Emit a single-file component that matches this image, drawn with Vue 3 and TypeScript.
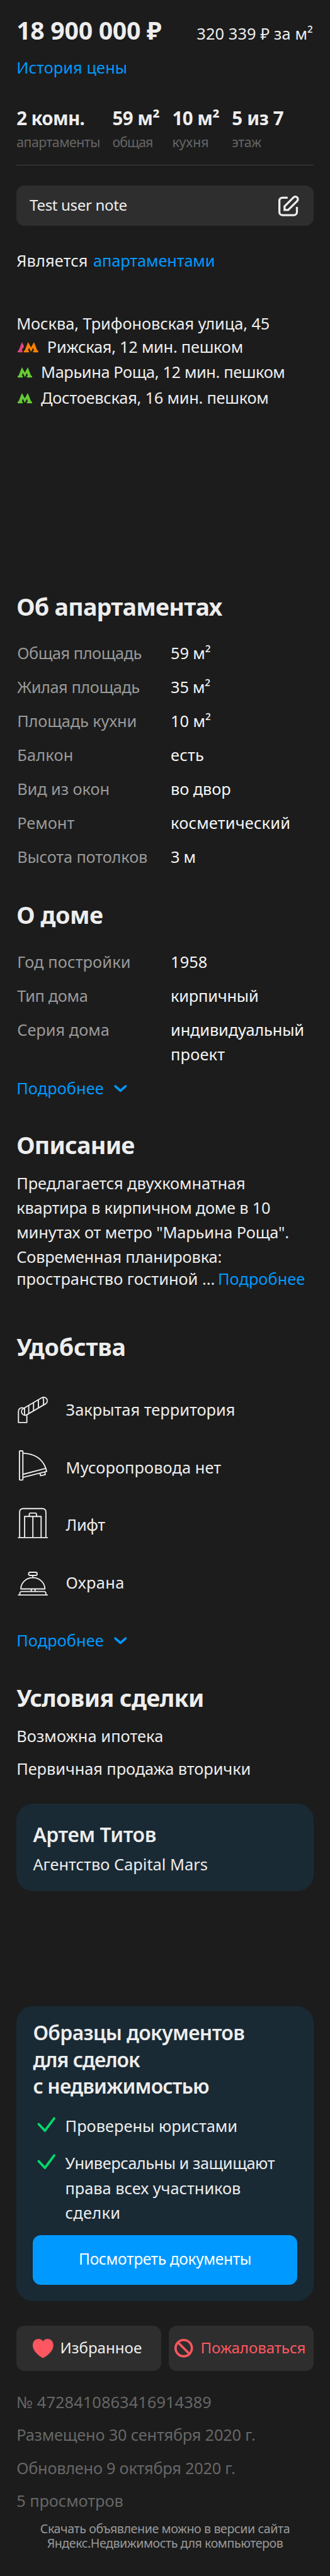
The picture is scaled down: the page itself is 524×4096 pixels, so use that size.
<script setup lang="ts">
interface Stat { value: string; valueWidth: number; label: string; labelWidth: number }
interface Param { label: string; labelWidth: number; lines: [string, number][] }

// Root font size is 10 layout units, so every rem length is units / 10.
const unit = 0.81855
const canvas = document.createElement('canvas').getContext('2d')!

// Tracks a line of text so that its glyphs span the given number of layout units.
const vFit = {
  mounted(el: HTMLElement, binding: { value: number }) {
    const text = (el.textContent ?? '').trim()
    const style = getComputedStyle(el)
    const size = parseFloat(style.fontSize)
    canvas.font = `${style.fontWeight} ${size * 10}px "Noto Sans"`
    const box = canvas.measureText(text)
    const ink = (box.actualBoundingBoxLeft + box.actualBoundingBoxRight) / 10
    const tracking = (binding.value * unit - ink) / (text.length - 1)
    el.style.letterSpacing = `${(tracking / size).toFixed(4)}em`
  },
}

const stats: Stat[] = [
  { value: '2 комн.', valueWidth: 130, label: 'апартаменты', labelWidth: 159.5 },
  { value: '59 м²', valueWidth: 89, label: 'общая', labelWidth: 76 },
  { value: '10 м²', valueWidth: 89, label: 'кухня', labelWidth: 66.6 },
  { value: '5 из 7', valueWidth: 98, label: 'этаж', labelWidth: 56 },
]

const stations = [
  { name: 'Рижская, 12 мин. пешком', width: 375, double: true },
  { name: 'Марьина Роща, 12 мин. пешком', width: 468.5, double: false },
  { name: 'Достоевская, 16 мин. пешком', width: 439.5, double: false },
]

const flat: Param[] = [
  { label: 'Общая площадь', labelWidth: 239, lines: [['59 м²', 74.5]] },
  { label: 'Жилая площадь', labelWidth: 237, lines: [['35 м²', 74.5]] },
  { label: 'Площадь кухни', labelWidth: 227, lines: [['10 м²', 74]] },
  { label: 'Балкон', labelWidth: 103.5, lines: [['есть', 61.5]] },
  { label: 'Вид из окон', labelWidth: 174, lines: [['во двор', 113]] },
  { label: 'Ремонт', labelWidth: 108, lines: [['косметический', 227]] },
  { label: 'Высота потолков', labelWidth: 249, lines: [['3 м', 45]] },
]

const house: Param[] = [
  { label: 'Год постройки', labelWidth: 215, lines: [['1958', 67]] },
  { label: 'Тип дома', labelWidth: 135, lines: [['кирпичный', 165.5]] },
  { label: 'Серия дома', labelWidth: 175, lines: [['индивидуальный', 254], ['проект', 102]] },
]

const description: [string, number][] = [
  ['Предлагается двухкомнатная', 439],
  ['квартира в кирпичном доме в 10', 489],
  ['минутах от метро "Марьина Роща".', 524.5],
  ['Современная планировка:', 394.5],
]

const amenities = [
  { icon: 'barrier', name: 'Закрытая территория', width: 325 },
  { icon: 'chute', name: 'Мусоропровода нет', width: 298 },
  { icon: 'lift', name: 'Лифт', width: 76 },
  { icon: 'bell', name: 'Охрана', width: 109 },
]

const docTitle: [string, number][] = [
  ['Образцы документов', 408],
  ['для сделок', 208],
  ['с недвижимостью', 340],
]

const docPoints: [string, number][][] = [
  [['Проверены юристами', 329]],
  [['Универсальны и защищают', 406.5], ['права всех участников', 337], ['сделки', 103]],
]

const info: [string, number][] = [
  ['№ 4728410863416914389', 374],
  ['Размещено 30 сентября 2020 г.', 459],
  ['Обновлено 9 октября 2020 г.', 421],
  ['5 просмотров', 204],
]
</script>

<template>
  <main class="page">
    <header class="price-row">
      <span class="price" v-fit="279">18 900 000 ₽</span>
      <span class="price-per" v-fit="223">320 339 ₽ за м²</span>
    </header>
    <a class="history link"><span v-fit="209.5">История цены</span></a>

    <section class="stats">
      <div v-for="s in stats" :key="s.label">
        <div class="stat-value"><span v-fit="s.valueWidth">{{ s.value }}</span></div>
        <div class="stat-label"><span v-fit="s.labelWidth">{{ s.label }}</span></div>
      </div>
    </section>

    <section class="note">
      <span class="note-text" v-fit="188">Test user note</span>
      <svg class="note-icon" viewBox="0 0 40 40">
        <path d="M18 4H8a6 6 0 0 0-6 6v22a6 6 0 0 0 6 6h22a6 6 0 0 0 6-6V22" />
        <path d="M12 28v-7L29.5 3.5a4.95 4.95 0 0 1 7 7L19 28z" />
      </svg>
    </section>

    <p class="status">
      <span v-fit="135">Является</span>
      <a class="link" v-fit="232.5">апартаментами</a>
    </p>

    <section class="address">
      <div class="street"><span v-fit="487">Москва, Трифоновская улица, 45</span></div>
      <div v-for="s in stations" :key="s.name" class="station">
        <svg v-if="s.double" class="metro metro-double" viewBox="0 0 40 20">
          <path class="line-pink" d="M8.3 0L12.3 7.5 10.5 13 10 11 8 16.5H9.5V20H0V16.5H1.8z" />
          <path class="line-orange" transform="translate(12 0)" d="M8.3 0L14 10.5 19.7 0 26.2 16.5H28V20H18V16.5H20L18 11 14 19 10 11 8 16.5H9.8V20H0V16.5H1.8z" />
        </svg>
        <svg v-else class="metro" viewBox="0 0 28 20">
          <path class="line-green" d="M8.3 0L14 10.5 19.7 0 26.2 16.5H28V20H18V16.5H20L18 11 14 19 10 11 8 16.5H9.8V20H0V16.5H1.8z" />
        </svg>
        <span v-fit="s.width">{{ s.name }}</span>
      </div>
    </section>

    <h2 class="h-flat"><span v-fit="397.5">Об апартаментах</span></h2>
    <dl class="params">
      <div v-for="p in flat" :key="p.label" class="param">
        <dt><span v-fit="p.labelWidth">{{ p.label }}</span></dt>
        <dd><div v-for="l in p.lines" :key="l[0]"><span v-fit="l[1]">{{ l[0] }}</span></div></dd>
      </div>
    </dl>

    <h2 class="h-house"><span v-fit="164.5">О доме</span></h2>
    <dl class="params">
      <div v-for="p in house" :key="p.label" class="param">
        <dt><span v-fit="p.labelWidth">{{ p.label }}</span></dt>
        <dd><div v-for="l in p.lines" :key="l[0]"><span v-fit="l[1]">{{ l[0] }}</span></div></dd>
      </div>
    </dl>
    <a class="more more-house link">
      <span v-fit="165">Подробнее</span>
      <svg class="chevron" viewBox="0 0 25 14"><path d="M2.5 2.5l10 9 10-9" /></svg>
    </a>

    <h2 class="h-about"><span v-fit="226">Описание</span></h2>
    <div class="about">
      <div v-for="l in description" :key="l[0]"><span v-fit="l[1]">{{ l[0] }}</span></div>
      <div class="about-last">
        <span v-fit="380.5">пространство гостиной ...</span>
        <a class="link" v-fit="165">Подробнее</a>
      </div>
    </div>

    <h2 class="h-amenities"><span v-fit="209.5">Удобства</span></h2>
    <ul class="amenities">
      <li v-for="a in amenities" :key="a.icon">
        <svg class="amenity-icon" viewBox="0 0 64 64">
          <g v-if="a.icon === 'barrier'">
            <path d="M14 28.2C13 27.6 12 27.3 11 27.3A7 7 0 0 0 4 34.3V56H20.3V42" />
            <path d="M13.2 28.95L49.8 7.65A7 7 0 0 1 56.8 19.75L20.2 41.05A7 7 0 0 1 13.2 28.95z" />
            <path d="M15.8 28V41.5M24 22.7V38.8M33.3 17.3V33.4M42.7 11.9V27.9M51.8 7.2C53 12 53.5 17 52.3 22.3" />
          </g>
          <g v-else-if="a.icon === 'chute'">
            <rect x="6" y="0" width="6.6" height="56.6" rx="1.2" />
            <path d="M13 4.5C34 5.5 50 15 57 33.5L58.7 39.9 13 51.5M13 45.5L56.5 34M45.7 43.5L47 48.2 56 46.2 55.2 41" />
          </g>
          <g v-else-if="a.icon === 'lift'">
            <path d="M3 56H61M6.3 56V6A6.3 6.3 0 0 1 12.6 -.3H51A6.3 6.3 0 0 1 57.3 6V56" />
            <path d="M16 56V15H48V56M32 15V56M25 15V10.9A2.5 2.5 0 0 1 27.5 8.4H36.5A2.5 2.5 0 0 1 39 10.9V15" />
          </g>
          <g v-else>
            <rect x="23.7" y="12.3" width="16.6" height="6" rx="3" />
            <path d="M32 18.3V22.7M8.7 44.6A23.3 21.8 0 0 1 55.3 44.6zM29 44.6V49.6M36.3 44.6V49.6M3 56.3H61" />
            <path d="M7.3 56.3C5.6 53 7 49.6 10.3 49.6H53.7C57 49.6 58.4 53 56.7 56.3" />
          </g>
        </svg>
        <span v-fit="a.width">{{ a.name }}</span>
      </li>
    </ul>
    <a class="more more-amenities link">
      <span v-fit="165">Подробнее</span>
      <svg class="chevron" viewBox="0 0 25 14"><path d="M2.5 2.5l10 9 10-9" /></svg>
    </a>

    <h2 class="h-terms"><span v-fit="361.5">Условия сделки</span></h2>
    <div class="terms">
      <div><span v-fit="279.5">Возможна ипотека</span></div>
      <div><span v-fit="449.5">Первичная продажа вторички</span></div>
    </div>

    <section class="card agent">
      <div class="card-title"><span v-fit="238">Артем Титов</span></div>
      <div class="agency"><span v-fit="338">Агентство Capital Mars</span></div>
    </section>

    <section class="card docs">
      <div v-for="l in docTitle" :key="l[0]" class="card-title"><span v-fit="l[1]">{{ l[0] }}</span></div>
      <ul class="points">
        <li v-for="p in docPoints" :key="p[0][0]">
          <svg class="check" viewBox="0 0 35 30"><path d="M3 14L15 27 33 2.8" /></svg>
          <div>
            <div v-for="l in p" :key="l[0]"><span v-fit="l[1]">{{ l[0] }}</span></div>
          </div>
        </li>
      </ul>
      <button class="docs-button"><span v-fit="330">Посмотреть документы</span></button>
    </section>

    <section class="actions">
      <button class="action favorite">
        <svg class="heart" viewBox="0 0 40 37"><path d="M20 37C15 35 0 25 0 12.5C0 5 5 0 11.3 0C15 0 18.3 1.8 20 4.8C21.7 1.8 25 0 28.7 0C35 0 40 5 40 12.5C40 25 25 35 20 37z" /></svg>
        <span v-fit="154.5">Избранное</span>
      </button>
      <button class="action complain">
        <svg class="ban" viewBox="0 0 36 36"><circle cx="18" cy="18" r="15.8" /><path d="M7 7L29 29" /></svg>
        <span v-fit="199">Пожаловаться</span>
      </button>
    </section>

    <section class="info">
      <div v-for="l in info" :key="l[0]"><span v-fit="l[1]">{{ l[0] }}</span></div>
    </section>

    <footer class="footer">
      <div><span v-fit="482">Скачать объявление можно в версии сайта</span></div>
      <div><span v-fit="457">Яндекс.Недвижимость для компьютеров</span></div>
    </footer>
  </main>
</template>

<style>
html {
  font-size: 8.1855px;
  background: #1c1c1c;
}
</style>

<style scoped>
.page {
  box-sizing: border-box;
  height: 500.4rem;
  padding: 3.16rem 3.2rem 0;
  overflow: hidden;
  background: #1c1c1c;
  color: #ededed;
  font: 400 3.1rem/4.8rem "Noto Sans", "Open Sans", sans-serif;
  white-space: nowrap;
}
h2, p, ul, dl, dd { margin: 0; padding: 0; }
ul { list-style: none; }
svg { display: block; flex: none; fill: none; overflow: visible; }
button {
  border: 0;
  padding: 0;
  font: inherit;
  color: inherit;
  white-space: nowrap;
}
h2 { font-size: 4.6rem; line-height: 5.6rem; font-weight: 700; }
.link { color: #0099ff; }

.price-row { display: flex; justify-content: space-between; align-items: baseline; height: 5.6rem; padding-right: 0.1rem; }
.price { font-size: 4.8rem; line-height: 5.6rem; font-weight: 700; }
.price-per { line-height: 3.2rem; }
.history { display: block; margin-top: 2.03rem; }

.stats {
  display: grid;
  grid-template-columns: 18.6rem 11.6rem 11.6rem auto;
  margin-top: 5.02rem;
  padding-bottom: 2.64rem;
  border-bottom: 1px solid #424242;
}
.stat-value { font-size: 3.6rem; font-weight: 700; }
.stat-label { margin-top: 0.35rem; font-size: 2.6rem; line-height: 3.6rem; color: #666; }

.note {
  display: flex;
  align-items: center;
  justify-content: space-between;
  box-sizing: border-box;
  height: 7.8rem;
  margin-top: 3.97rem;
  padding: 0 2.8rem 0 2.55rem;
  border-radius: 1.6rem;
  background: #2e2e2e;
}
.note-text { font-size: 2.95rem; padding-bottom: 0.3rem; }
.note-icon { width: 4rem; height: 4rem; stroke: #ededed; stroke-width: 4; }

.status { display: flex; gap: 1.05rem; margin-top: 4.33rem; }
.address { margin-top: 7.67rem; }
.street { line-height: 4.25rem; }
.station { display: flex; align-items: center; margin-bottom: 0.16rem; }
.metro { width: 2.8rem; height: 2rem; margin: 0.2rem 1.75rem 0 0.2rem; }
.metro-double { width: 4rem; }
.line-pink { fill: #de4683; }
.line-orange { fill: #ff8000; }
.line-green { fill: #66cc33; }

.h-flat { margin-top: 35.4rem; }
.params { display: grid; gap: 1.8rem; margin-top: 3.88rem; }
.param { display: grid; grid-template-columns: 29.8rem auto; padding-left: 0.12rem; }
dt { color: #999; }
dd { color: #f5f5f5; }
.h-house { margin-top: 6.01rem; }
.more { display: flex; align-items: center; }
.more-house { margin-top: 1.77rem; }
.chevron { width: 2.5rem; height: 1.4rem; margin-left: 2rem; stroke: #0099ff; stroke-width: 4.4; stroke-linecap: round; stroke-linejoin: round; }

.h-about { margin-top: 5.81rem; }
.about { margin-top: 2.22rem; }
.about-last { display: flex; gap: 0.55rem; line-height: 3.54rem; }

.h-amenities { margin-top: 8.77rem; }
.amenities { display: grid; gap: 4.78rem; margin-top: 6.19rem; }
.amenities li { display: flex; align-items: center; height: 6.4rem; }
.amenity-icon { width: 6.4rem; height: 6.4rem; margin-right: 3.18rem; stroke: #ededed; stroke-width: 2.3; stroke-linejoin: round; }
.more-amenities { margin-top: 5.69rem; }

.h-terms { margin-top: 5.91rem; }
.terms { display: grid; gap: 1.6rem; margin-top: 2.16rem; }

.card { box-sizing: border-box; border-radius: 3.2rem; background: #192a35; padding: 0 3.2rem; }
.card-title { font-size: 3.9rem; line-height: 5.2rem; font-weight: 600; }
.agent { height: 16.97rem; margin-top: 4.4rem; padding-top: 3.34rem; }
.agency { margin-top: 0.86rem; }
.docs { height: 57.22rem; margin-top: 22.38rem; padding-top: 2.56rem; }
.points { display: grid; gap: 2.4rem; margin-top: 2.74rem; }
.points li { display: flex; align-items: flex-start; }
.check { width: 3.5rem; height: 3rem; margin: 0.6rem 1.95rem 0 0.8rem; stroke: #00db6a; stroke-width: 4.6; stroke-linecap: round; stroke-linejoin: round; }
.docs-button {
  display: block;
  width: 100%;
  height: 9.58rem;
  margin-top: 1.95rem;
  padding-bottom: 0.4rem;
  border-radius: 1.6rem;
  background: #0099ff;
  color: #fff;
  font-size: 3rem;
}

.actions { display: grid; grid-template-columns: 1fr 1fr; gap: 1.4rem; margin-top: 4.83rem; }
.action { display: flex; align-items: center; height: 8.77rem; border-radius: 1.6rem; background: #2e2e2e; font-size: 2.95rem; }
.action span { padding-bottom: 0.3rem; }
.heart { width: 4rem; height: 3.7rem; margin: 0 1.38rem 0 3.1rem; fill: #ff5761; }
.ban { width: 3.6rem; height: 3.6rem; margin: 0 1.5rem 0 1.1rem; stroke: #ff5761; stroke-width: 4.4; }
.complain { color: #ff5761; }

.info { display: grid; gap: 1.6rem; margin-top: 3.65rem; color: #666; }
.footer { margin-top: 1.48rem; color: #999; font-size: 2.4rem; line-height: 2.92rem; text-align: center; }
</style>
